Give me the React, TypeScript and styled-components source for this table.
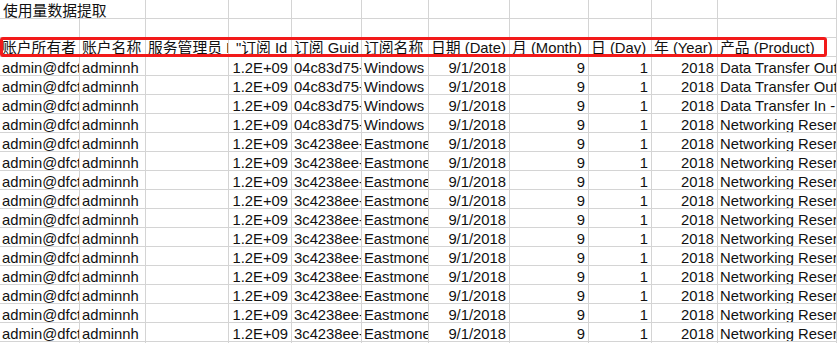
import styled, { createGlobalStyle } from 'styled-components'

const GlobalStyle = createGlobalStyle`
  html, body {
    margin: 0;
    padding: 0;
    background: #ffffff;
    overflow: hidden;
  }
`

const columns = [80, 66, 83, 63, 70, 67, 81, 79, 63, 66, 119]

type Align = 'left' | 'right'

interface Row {
  owner: string
  account: string
  admin: string
  subId: string
  guid: string
  subName: string
  date: string
  month: string
  day: string
  year: string
  product: string
}

const Sheet = styled.div`
  position: relative;
  width: 837px;
  height: 343px;
  overflow: hidden;
  font-family: 'Liberation Sans', 'Noto Sans CJK SC', sans-serif;
  font-size: 14.8px;
  color: #111;
`

const SheetRow = styled.div`
  display: grid;
  grid-template-columns: ${columns.map((w) => `${w}px`).join(' ')} 1fr;
  height: 19px;
`

const Cell = styled.div<{ $align?: Align; $pad?: number; $span?: number; $top?: number }>`
  box-sizing: border-box;
  grid-column: span ${(p) => p.$span ?? 1};
  border-right: 1px solid #d4d4d4;
  border-bottom: 1px solid #d4d4d4;
  overflow: hidden;
  white-space: nowrap;
  line-height: 18px;
  padding-top: ${(p) => p.$top ?? 1}px;
  text-align: ${(p) => p.$align ?? 'left'};
  ${(p) =>
    p.$align === 'right'
      ? `padding-right: ${p.$pad ?? 3}px;`
      : `padding-left: ${p.$pad ?? 2}px;`}
`

const Highlight = styled.div`
  position: absolute;
  left: 0;
  top: 37px;
  width: 827px;
  height: 20px;
  box-sizing: border-box;
  border: 3px solid #f21a1a;
  border-radius: 3px;
  pointer-events: none;
`

const headers: { label: string; pad?: number }[] = [
  { label: '账户所有者 Id' },
  { label: '账户名称' },
  { label: '服务管理员 Id' },
  { label: '"订阅 Id', pad: 7 },
  { label: '订阅 Guid' },
  { label: '订阅名称' },
  { label: '日期 (Date)' },
  { label: '月 (Month)' },
  { label: '日 (Day)' },
  { label: '年 (Year)' },
  { label: '产品 (Product)' },
]

const base = {
  owner: 'admin@dfctest.onmicrosoft.com',
  account: 'adminnh',
  admin: '',
  subId: '1.2E+09',
  date: '9/1/2018',
  month: '9',
  day: '1',
  year: '2018',
}

const rows: Row[] = [
  { ...base, guid: '04c83d75-', subName: 'Windows', product: 'Data Transfer Out (GB)' },
  { ...base, guid: '04c83d75-', subName: 'Windows', product: 'Data Transfer Out (GB)' },
  { ...base, guid: '04c83d75-', subName: 'Windows', product: 'Data Transfer In - Zone 1' },
  { ...base, guid: '04c83d75-', subName: 'Windows', product: 'Networking Reserved IP' },
  ...Array.from({ length: 11 }, () => ({
    ...base,
    guid: '3c4238ee-',
    subName: 'Eastmoney',
    product: 'Networking Reserved IP',
  })),
]

export default function App() {
  return (
    <>
      <GlobalStyle />
      <Sheet>
        <SheetRow>
          <Cell $span={2} $pad={3} $top={2}>使用量数据提取</Cell>
          {columns.slice(2).map((_, i) => (
            <Cell key={i} />
          ))}
          <Cell />
        </SheetRow>
        <SheetRow>
          {columns.map((_, i) => (
            <Cell key={i} />
          ))}
          <Cell />
        </SheetRow>
        <SheetRow>
          {headers.map((h) => (
            <Cell key={h.label} $pad={h.pad}>
              {h.label}
            </Cell>
          ))}
          <Cell />
        </SheetRow>
        {rows.map((r, i) => (
          <SheetRow key={i}>
            <Cell $top={2}>{r.owner}</Cell>
            <Cell $top={2}>{r.account}</Cell>
            <Cell $top={2}>{r.admin}</Cell>
            <Cell $top={2} $align="right">{r.subId}</Cell>
            <Cell $top={2}>{r.guid}</Cell>
            <Cell $top={2}>{r.subName}</Cell>
            <Cell $top={2} $align="right">{r.date}</Cell>
            <Cell $top={2} $align="right">{r.month}</Cell>
            <Cell $top={2} $align="right">{r.day}</Cell>
            <Cell $top={2} $align="right">{r.year}</Cell>
            <Cell $top={2}>{r.product}</Cell>
            <Cell />
          </SheetRow>
        ))}
        <SheetRow>
          {columns.map((_, i) => (
            <Cell key={i} />
          ))}
          <Cell />
        </SheetRow>
        <Highlight />
      </Sheet>
    </>
  )
}
